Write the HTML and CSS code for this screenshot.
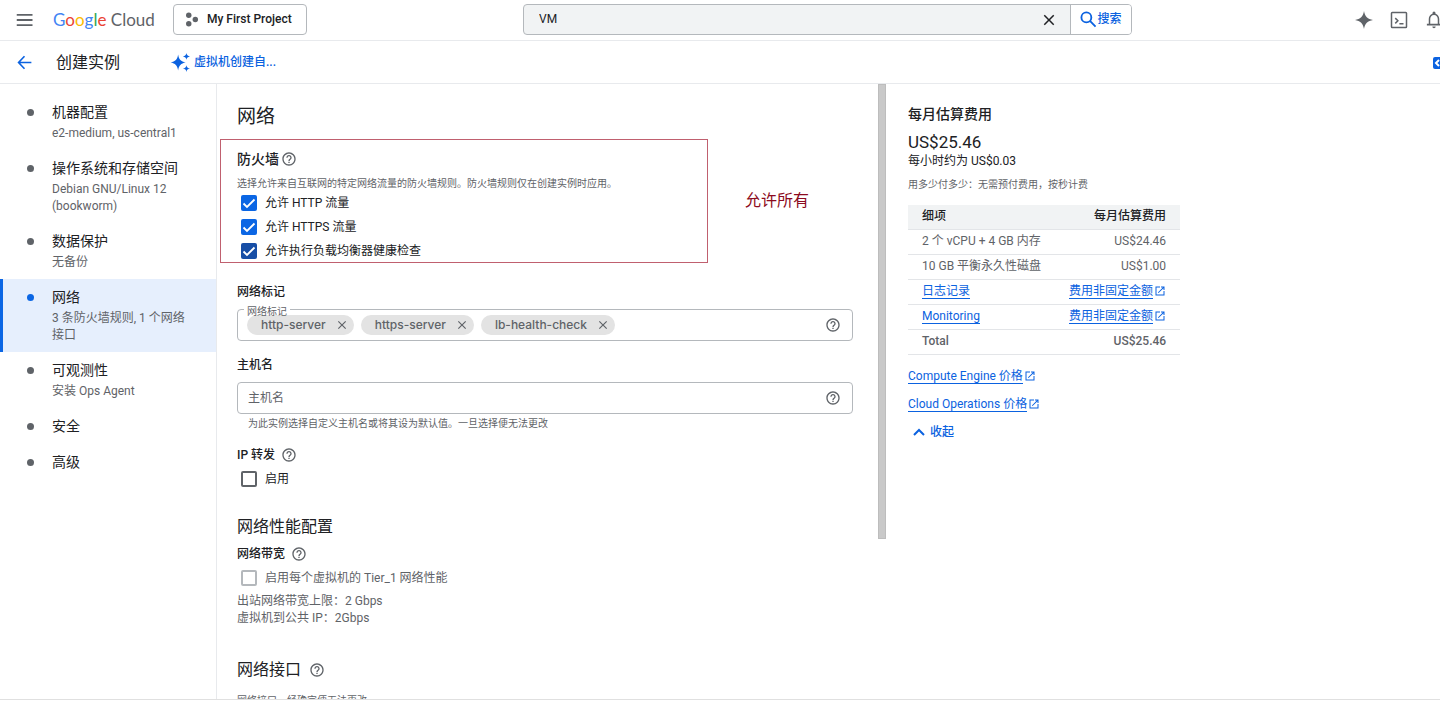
FILE: index.html
```html
<!DOCTYPE html>
<html lang="zh-CN">
<head>
  <meta charset="UTF-8">
  <meta name="viewport" content="width=device-width, initial-scale=1.0">
  <title>创建实例</title>
  <link rel="stylesheet" href="styles.css">
</head>
<body>
  <!-- shared icons -->
  <svg class="sprite" aria-hidden="true">
    <symbol id="icon-help" viewBox="0 0 24 24">
      <path d="M11 18h2v-2h-2v2zm1-16C6.48 2 2 6.48 2 12s4.48 10 10 10 10-4.48 10-10S17.520 2 12 2zm0 18c-4.410 0-8-3.590-8-8s3.590-8 8-8 8 3.590 8 8-3.590 8-8 8zm0-14c-2.210 0-4 1.790-4 4h2c0-1.100.9-2 2-2s2 .9 2 2c0 2-3 1.750-3 5h2c0-2.250 3-2.500 3-5 0-2.210-1.790-4-4-4z"/>
    </symbol>
    <symbol id="icon-close" viewBox="0 0 24 24">
      <path d="M19 6.410 17.590 5 12 10.590 6.410 5 5 6.410 10.590 12 5 17.590 6.410 19 12 13.410 17.590 19 19 17.590 13.410 12z"/>
    </symbol>
    <symbol id="icon-open" viewBox="0 0 24 24">
      <path d="M19 19H5V5h7V3H3v18h18v-9h-2v7zM14 3v2h3.590l-9.830 9.830 1.410 1.410L19 6.410V10h2V3h-7z"/>
    </symbol>
  </svg>

  <header class="topbar">
    <div class="topbar-left">
      <button class="icon-button menu-button" aria-label="导航菜单">
        <svg viewBox="0 0 24 24"><path d="M1 4h21v2.400H1zM1 10.800h21v2.400H1zM1 17.600h21V20H1z"/></svg>
      </button>
      <a class="logo" href="#"><span class="g-blue">G</span><span class="g-red">o</span><span class="g-yellow">o</span><span class="g-blue">g</span><span class="g-green">l</span><span class="g-red">e</span> Cloud</a>
      <button class="project-button">
        <svg viewBox="0 0 16 16"><circle cx="4" cy="3.500" r="2.900"/><circle cx="11" cy="8" r="2.900"/><circle cx="4" cy="12.500" r="2.900"/></svg>
        My First Project
      </button>
    </div>
    <form class="search">
      <input type="text" value="VM" aria-label="搜索">
      <button class="search-clear" type="reset" aria-label="清除">
        <svg><use href="#icon-close"/></svg>
      </button>
      <button class="search-submit" type="button">
        <svg viewBox="0 0 24 24"><path fill="none" stroke="currentColor" stroke-width="2.600" d="M9 2a7 7 0 1 0 0 14a7 7 0 1 0 0-14zM14 14l8 8"/></svg>搜索
      </button>
    </form>
    <div class="topbar-right">
      <button class="icon-button" aria-label="Gemini">
        <svg viewBox="0 0 24 24"><path d="M12 0c1 7 5 11 12 12-7 1-11 5-12 12-1-7-5-11-12-12 7-1 11-5 12-12z"/></svg>
      </button>
      <button class="icon-button" aria-label="Cloud Shell">
        <svg viewBox="0 0 24 24"><g fill="none" stroke="currentColor" stroke-width="2"><rect x="2" y="2" width="20" height="20" rx="1"/><path d="M7 9.500l3.500 3.500L7 16.500M12.500 17H18"/></g></svg>
      </button>
      <button class="icon-button" aria-label="通知">
        <svg viewBox="0 0 24 24"><path d="M12 23c1.200 0 2.200-1 2.200-2.200H9.800C9.800 22 10.800 23 12 23zM19 17V10.500c0-3.400-2-6.200-5-7V2.500a2 2 0 0 0-4 0v1c-3 .8-5 3.600-5 7V17H2.500v2.200h19V17zM17 17H7v-6.500C7 7.500 9 5.200 12 5.200s5 2.300 5 5.300z"/></svg>
      </button>
    </div>
  </header>

  <div class="subbar">
    <button class="icon-button back-button" aria-label="返回">
      <svg viewBox="0 0 24 24"><path fill="none" stroke="currentColor" stroke-width="2.600" d="M23 12H3M12 2L2.500 12l9.500 10"/></svg>
    </button>
    <h1>创建实例</h1>
    <a class="assist" href="#">
      <svg viewBox="0 0 24 24"><path d="M9 2c.9 6 3.500 9 9.500 10C12.500 13 9.900 16 9 22 8.100 16 5.500 13-.5 12 5.500 11 8.100 8 9 2zM19.500 0c.4 2.600 1.500 3.700 4.500 4.300-3 .6-4.100 1.700-4.500 4.300-.4-2.600-1.500-3.700-4.500-4.300 3-.6 4.100-1.700 4.500-4.300zM19.500 15.400c.4 2.600 1.500 3.700 4.500 4.300-3 .6-4.100 1.700-4.500 4.300-.4-2.600-1.500-3.700-4.500-4.300 3-.6 4.100-1.700 4.500-4.300z"/></svg>虚拟机创建自...
    </a>
    <button class="panel-toggle" aria-label="展开面板">
      <svg viewBox="0 0 12 12"><path fill="none" stroke="currentColor" stroke-width="2" d="M6 3L3 6l3 3"/></svg>
    </button>
  </div>

  <div class="page">
    <nav class="steps">
      <a href="#"><b>机器配置</b><small>e2-medium, us-central1</small></a>
      <a href="#"><b>操作系统和存储空间</b><small>Debian GNU/Linux 12 (bookworm)</small></a>
      <a href="#"><b>数据保护</b><small>无备份</small></a>
      <a class="active" href="#"><b>网络</b><small>3 条防火墙规则, 1 个网络接口</small></a>
      <a href="#"><b>可观测性</b><small>安装 Ops Agent</small></a>
      <a href="#"><b>安全</b></a>
      <a href="#"><b>高级</b></a>
    </nav>

    <main class="content">
      <h2>网络</h2>

      <section class="firewall">
        <h3 class="firewall-title">防火墙 <svg class="help"><use href="#icon-help"/></svg></h3>
        <p class="hint">选择允许来自互联网的特定网络流量的防火墙规则。防火墙规则仅在创建实例时应用。</p>
        <label class="check"><input type="checkbox" checked>允许 HTTP 流量</label>
        <label class="check"><input type="checkbox" checked>允许 HTTPS 流量</label>
        <label class="check"><input class="pressed" type="checkbox" checked>允许执行负载均衡器健康检查</label>
        <div class="mark-box"></div>
        <div class="mark-text">允许所有</div>
      </section>

      <section class="group">
        <h4>网络标记</h4>
        <div class="field">
          <label class="field-label" for="tags">网络标记</label>
          <span class="chip">http-server<button aria-label="移除 http-server"><svg><use href="#icon-close"/></svg></button></span>
          <span class="chip">https-server<button aria-label="移除 https-server"><svg><use href="#icon-close"/></svg></button></span>
          <span class="chip">lb-health-check<button aria-label="移除 lb-health-check"><svg><use href="#icon-close"/></svg></button></span>
          <input id="tags" type="text">
          <svg class="help"><use href="#icon-help"/></svg>
        </div>
      </section>

      <section class="group">
        <h4><label for="hostname">主机名</label></h4>
        <div class="field">
          <input id="hostname" type="text" placeholder="主机名">
          <svg class="help"><use href="#icon-help"/></svg>
        </div>
        <p class="hint field-hint">为此实例选择自定义主机名或将其设为默认值。一旦选择便无法更改</p>
      </section>

      <section class="group">
        <h4 class="tight">IP 转发 <svg class="help"><use href="#icon-help"/></svg></h4>
        <label class="check"><input type="checkbox">启用</label>
      </section>

      <section class="group large">
        <h3>网络性能配置</h3>
        <h4 class="tight">网络带宽 <svg class="help"><use href="#icon-help"/></svg></h4>
        <label class="check disabled"><input type="checkbox" disabled>启用每个虚拟机的 Tier_1 网络性能</label>
        <p class="limits">出站网络带宽上限：2 Gbps<br>虚拟机到公共 IP：2Gbps</p>
      </section>

      <section class="group interfaces">
        <h3>网络接口 <svg class="help"><use href="#icon-help"/></svg></h3>
        <p class="hint">网络接口一经确定便无法更改</p>
      </section>
    </main>

    <div class="scrollbar"><div class="thumb"></div></div>

    <aside class="cost">
      <h3>每月估算费用</h3>
      <p class="price">US$25.46</p>
      <p class="hourly">每小时约为 US$0.03</p>
      <p class="hint">用多少付多少：无需预付费用，按秒计费</p>
      <table>
        <thead>
          <tr><th>细项</th><th>每月估算费用</th></tr>
        </thead>
        <tbody>
          <tr><td>2 个 vCPU + 4 GB 内存</td><td>US$24.46</td></tr>
          <tr><td>10 GB 平衡永久性磁盘</td><td>US$1.00</td></tr>
          <tr><td><a href="#"><span>日志记录</span></a></td><td><a href="#"><span>费用非固定金额</span><svg><use href="#icon-open"/></svg></a></td></tr>
          <tr><td><a href="#"><span>Monitoring</span></a></td><td><a href="#"><span>费用非固定金额</span><svg><use href="#icon-open"/></svg></a></td></tr>
          <tr class="total"><td>Total</td><td>US$25.46</td></tr>
        </tbody>
      </table>
      <a class="price-link" href="#"><span>Compute Engine 价格</span><svg><use href="#icon-open"/></svg></a>
      <a class="price-link" href="#"><span>Cloud Operations 价格</span><svg><use href="#icon-open"/></svg></a>
      <button class="collapse">
        <svg viewBox="0 0 12 12"><path fill="none" stroke="currentColor" stroke-width="2" d="M1 9l5-5 5 5"/></svg>收起
      </button>
    </aside>
  </div>

  <footer class="bottombar"></footer>
</body>
</html>
```

FILE: styles.css
```css
* {
  box-sizing: border-box;
}

body {
  margin: 0;
  height: 100vh;
  display: flex;
  flex-direction: column;
  overflow: hidden;
  font-family: Roboto, "Noto Sans CJK SC", sans-serif;
  font-size: 12px;
  line-height: 17px;
  color: #202124;
  background: #fff;
}

h1, h2, h3, h4, p {
  margin: 0;
  font-weight: 400;
}

a {
  color: #0b62e0;
  text-decoration: none;
}

button, input {
  font: inherit;
  color: inherit;
}

button {
  display: flex;
  align-items: center;
  padding: 0;
  border: none;
  background: none;
  cursor: pointer;
}

svg {
  fill: currentColor;
  flex: none;
}

.sprite {
  position: absolute;
  width: 0;
  height: 0;
}

.icon-button {
  color: #5f6368;
}

.icon-button svg {
  width: 18px;
  height: 18px;
}

/* top bar */
.topbar {
  flex: none;
  height: 41px;
  padding-bottom: 1px;
  border-bottom: 1px solid #e8eaed;
  display: grid;
  grid-template-columns: 523fr 609fr 308fr;
  align-items: center;
}

.topbar-left {
  display: flex;
  align-items: center;
  padding-left: 16px;
}

.logo {
  width: 120px;
  margin-left: 19px;
  font-family: Lato, sans-serif;
  font-size: 17px;
  line-height: 20px;
  color: #5f6368;
  white-space: nowrap;
}

.g-blue { color: #4285f4; }
.g-red { color: #ea4335; }
.g-yellow { color: #fbbc04; }
.g-green { color: #34a853; }

.project-button {
  height: 31px;
  padding: 0 14px 0 11px;
  gap: 7px;
  border: 1px solid #b4b8bc;
  border-radius: 4px;
  font-weight: 500;
  white-space: nowrap;
}

.project-button svg {
  width: 15px;
  height: 15px;
  color: #5f6368;
}

.search {
  height: 31px;
  display: flex;
  border: 1px solid #b4b8bc;
  border-radius: 4px;
  background: #f1f3f4;
  overflow: hidden;
}

.search input {
  flex: 1;
  min-width: 0;
  padding: 0 15px;
  border: none;
  outline: none;
  background: none;
}

.search-clear {
  width: 42px;
  justify-content: center;
}

.search-clear svg {
  width: 18px;
  height: 18px;
}

.search-submit {
  width: 61px;
  justify-content: center;
  border-left: 1px solid #b4b8bc;
  background: #fff;
  color: #0b62e0;
  font-weight: 500;
}

.search-submit svg {
  width: 17px;
  height: 17px;
}

.topbar-right {
  display: flex;
  justify-content: flex-end;
  gap: 17px;
  margin-right: -3px;
}

/* title bar */
.subbar {
  flex: none;
  height: 43px;
  border-bottom: 1px solid #e8eaed;
  display: flex;
  align-items: center;
  padding: 1px 0 0 17px;
}

.back-button {
  color: #0b62e0;
}

.back-button svg {
  width: 15px;
  height: 15px;
}

.subbar h1 {
  width: 115px;
  margin-left: 24px;
  font-size: 16px;
  line-height: 24px;
}

.assist {
  display: flex;
  align-items: center;
  gap: 4px;
  font-weight: 500;
}

.assist svg {
  width: 19px;
  height: 19px;
  overflow: visible;
}

.panel-toggle {
  width: 7px;
  height: 12px;
  margin-left: auto;
  border-radius: 2px 0 0 2px;
  background: #0b62e0;
  color: #fff;
  overflow: hidden;
}

.panel-toggle svg {
  width: 12px;
  height: 12px;
}

.page {
  flex: 1;
  min-height: 0;
  display: grid;
  grid-template-columns: 217px minmax(0, 661fr) 8px minmax(300px, 554fr);
}

/* steps on the left */
.steps {
  display: flex;
  flex-direction: column;
  padding-top: 10px;
  border-right: 1px solid #e8eaed;
}

.steps a {
  position: relative;
  display: flex;
  flex-direction: column;
  gap: 3px;
  padding: 8px 24px 8px 52px;
  color: #202124;
}

.steps b {
  font-size: 14px;
  font-weight: 400;
  line-height: 20px;
}

.steps small {
  font-size: 12px;
  color: #5f6368;
}

.steps a::before {
  content: "";
  position: absolute;
  left: 27px;
  top: 15px;
  width: 7px;
  height: 7px;
  border-radius: 50%;
  background: #5f6368;
}

.steps .active {
  background: #e6effd;
  box-shadow: inset 3px 0 #0b66e4;
}

.steps .active::before {
  background: #0b66e4;
}

/* form */
.content {
  padding: 19px 25px 0 20px;
  overflow: hidden;
}

h2 {
  font-size: 19px;
  line-height: 28px;
}

h3 {
  display: flex;
  align-items: center;
  gap: 8px;
  font-size: 16px;
  line-height: 24px;
}

h4 {
  display: flex;
  align-items: center;
  gap: 6px;
  margin-bottom: 7px;
  font-weight: 500;
  line-height: 20px;
}

h4.tight {
  margin-bottom: 2px;
}

.help {
  width: 16px;
  height: 16px;
  color: #5f6368;
}

.hint {
  font-size: 10px;
  line-height: 15px;
  color: #5f6368;
}

.firewall {
  position: relative;
  padding-top: 18px;
}

.firewall-title {
  gap: 2px;
  margin-bottom: 7px;
  font-size: 14px;
  font-weight: 500;
  line-height: 20px;
}

.check {
  display: flex;
  align-items: center;
  gap: 8px;
  padding-left: 4px;
  line-height: 24px;
}

.check input {
  appearance: none;
  width: 16px;
  height: 16px;
  margin: 0;
  border: 2px solid #5f6368;
  border-radius: 2px;
}

.check input:checked {
  border: none;
  background: #0b66e4 url("data:image/svg+xml,%3Csvg xmlns='http://www.w3.org/2000/svg' viewBox='0 0 16 16'%3E%3Cpath fill='none' stroke='white' stroke-width='1.800' d='M2.500 8.500l3.500 3.500 7.500-7.500'/%3E%3C/svg%3E");
}

.check input.pressed:checked {
  background-color: #174ea6;
}

.check.disabled {
  color: #5f6368;
}

.check.disabled input {
  border-color: #b4b8bc;
}

.mark-box {
  position: absolute;
  top: 8px;
  left: -17px;
  width: 488px;
  height: 124px;
  border: 1px solid #c0606f;
  pointer-events: none;
}

.mark-text {
  position: absolute;
  top: 58px;
  left: 508px;
  font-size: 16px;
  line-height: 24px;
  color: #8c0a20;
}

.group {
  margin-top: 14px;
}

.firewall + .group {
  margin-top: 19px;
}

.field {
  position: relative;
  display: flex;
  align-items: center;
  gap: 7px;
  height: 32px;
  padding: 0 11px 0 9px;
  border: 1px solid #b4b8bc;
  border-radius: 4px;
}

.field input {
  flex: 1;
  min-width: 0;
  padding: 0 1px;
  border: none;
  outline: none;
  background: none;
}

.field input::placeholder {
  color: #5f6368;
}

.field-label {
  position: absolute;
  top: -6px;
  left: 6px;
  padding: 0 3px;
  font-size: 10px;
  line-height: 15px;
  color: #5f6368;
  background: linear-gradient(#fff 50%, transparent 50%);
}

.chip {
  display: flex;
  align-items: center;
  gap: 9px;
  padding: 0 5px 0 14px;
  border-radius: 10px;
  font-family: Inter, Roboto, sans-serif;
  font-weight: 500;
  line-height: 20px;
  color: #5f6368;
  background: #e3e3e3;
  white-space: nowrap;
}

.chip svg {
  width: 14px;
  height: 14px;
}

.field-hint {
  margin-top: 2px;
  padding-left: 11px;
}

.large {
  margin-top: 24px;
}

.large h3 {
  margin-bottom: 5px;
}

.limits {
  margin-top: 3px;
  color: #5f6368;
}

.interfaces {
  margin-top: 31px;
}

.interfaces h3 {
  margin-bottom: 11px;
}

.scrollbar {
  overflow: hidden;
}

.thumb {
  height: 74%;
  border: 1px solid #bdbdbd;
  background: #c9c9c9;
}

/* monthly estimate */
.cost {
  display: flex;
  flex-direction: column;
  align-items: flex-start;
  padding: 20px 22px 0;
}

.cost h3 {
  margin-bottom: 7px;
  font-size: 14px;
  font-weight: 500;
  line-height: 20px;
}

.price {
  font-size: 17px;
  line-height: 22px;
}

.hourly {
  margin-bottom: 8px;
  line-height: 16px;
}

.cost table {
  width: 272px;
  margin: 13px 0 11px;
  border-collapse: collapse;
  white-space: nowrap;
}

.cost th, .cost td {
  height: 25px;
  padding: 0 14px;
  border-bottom: 1px solid #e3e5e8;
  text-align: left;
}

.cost th {
  height: 24px;
  font-weight: 500;
  background: #f1f3f4;
}

.cost td {
  color: #5f6368;
}

.cost th:last-child, .cost td:last-child {
  text-align: right;
}

.cost .total td {
  font-weight: 500;
}

.cost a span {
  border-bottom: 1px solid currentColor;
}

.cost a svg {
  width: 12px;
  height: 12px;
  margin-left: 1px;
  vertical-align: -2px;
}

.price-link {
  margin-bottom: 8px;
  line-height: 20px;
}

.collapse {
  gap: 5px;
  padding-left: 5px;
  color: #0b62e0;
  font-weight: 500;
  line-height: 20px;
}

.collapse svg {
  width: 12px;
  height: 12px;
}

.bottombar {
  flex: none;
  height: 11px;
  border-top: 1px solid #e0e0e0;
}
```
